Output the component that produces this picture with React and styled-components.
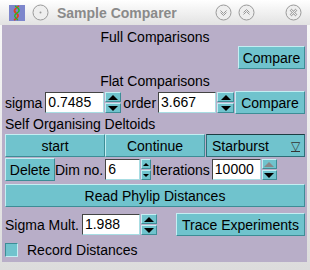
import React from 'react';
import styled, { createGlobalStyle } from 'styled-components';

const Global = createGlobalStyle`
  body { margin: 0; background: #ffffff; }
  * { box-sizing: border-box; }
`;

const Window = styled.div`
  width: 310px;
  height: 270px;
  display: flex;
  flex-direction: column;
  background: linear-gradient(#fafafa, #dcdcdc);
  font-family: "Liberation Sans", Arial, sans-serif;
  font-size: 14px;
  color: #000;
`;

const TitleBar = styled.div`
  height: 25px;
  display: flex;
  align-items: center;
  padding: 0 8px 0 9px;
  background: linear-gradient(#ffffff, #e2e2e2);
`;

const Title = styled.span`
  margin-left: 8px;
  font-weight: bold;
  font-size: 14px;
  color: #8a8a8a;
  flex: 1;
`;

const TitleBtn = styled.svg`
  width: 17px;
  height: 17px;
  margin-left: ${(p) => p.$gap || 0}px;
`;

const Panel = styled.div`
  flex: 1;
  margin: 0 3px 8px 2px;
  padding: 3px 2px 0 3px;
  background: #b8aec8;
  display: flex;
  flex-direction: column;
`;

const Heading = styled.div`
  height: 18px;
  line-height: 18px;
  text-align: ${(p) => p.$align || 'center'};
  margin-top: ${(p) => p.$mt || 0}px;
`;

const Row = styled.div`
  display: flex;
  align-items: center;
  height: ${(p) => p.$h || 23}px;
  margin-top: ${(p) => p.$mt || 0}px;
  justify-content: ${(p) => p.$justify || 'flex-start'};
`;

const Button = styled.div`
  height: ${(p) => p.$h || 23}px;
  width: ${(p) => (p.$w ? `${p.$w}px` : 'auto')};
  flex: ${(p) => (p.$grow ? 1 : 'none')};
  margin-left: ${(p) => p.$ml || 0};
  padding: 0 3px;
  display: flex;
  align-items: center;
  justify-content: center;
  background: #70c3cd;
  border: 1px solid;
  border-color: #c4eef2 #3d8d96 #3d8d96 #c4eef2;
  white-space: nowrap;
`;

const Label = styled.span`
  margin: 0 ${(p) => p.$mr || 2}px 0 ${(p) => p.$ml || 0}px;
  white-space: nowrap;
`;

const Input = styled.div`
  width: ${(p) => p.$w}px;
  height: 21px;
  background: #fff;
  border: 1px solid;
  border-color: #444 #a8dde3 #a8dde3 #444;
  padding: 0 2px;
  line-height: 19px;
`;

const Spin = styled.div`
  width: ${(p) => p.$w || 16}px;
  height: 21px;
  margin-left: 1px;
  display: flex;
  flex-direction: column;
  gap: 1px;
`;

const SpinHalf = styled.div`
  flex: 1;
  background: #70c3cd;
  display: flex;
  align-items: center;
  justify-content: center;
  border: 1px solid;
  border-color: #c4eef2 #3d8d96 #3d8d96 #c4eef2;
`;

const Arrow = styled.div`
  width: 0;
  height: 0;
  border-left: ${(p) => p.$s}px solid transparent;
  border-right: ${(p) => p.$s}px solid transparent;
  ${(p) => (p.$up ? 'border-bottom' : 'border-top')}: ${(p) => p.$s}px solid ${(p) => p.$c || '#000'};
`;

const Combo = styled.div`
  flex: 1;
  height: 23px;
  margin-left: 1px;
  background: #70c3cd;
  border: 1px solid #2f6f78;
  border-top-color: #1d3d42;
  display: flex;
  align-items: center;
  padding: 0 4px 0 5px;
`;

const ComboText = styled.span`
  flex: 1;
`;

const ComboArrow = styled.span`
  font-size: 12px;
  text-decoration: underline;
  color: #333;
`;

const Check = styled.div`
  width: 13px;
  height: 14px;
  background: #70c3cd;
  border: 1px solid;
  border-color: #3d8d96 #c4eef2 #c4eef2 #3d8d96;
  margin-right: 9px;
`;

const Spinner = ({ w, s = 4, disabledUp }) => (
  <Spin $w={w}>
    <SpinHalf>
      <Arrow $up $s={s} $c={disabledUp ? '#888' : '#000'} />
    </SpinHalf>
    <SpinHalf>
      <Arrow $s={s} />
    </SpinHalf>
  </Spin>
);

const CircleBtn = ({ children, gap }) => (
  <TitleBtn viewBox="0 0 17 17" $gap={gap}>
    <circle cx="8.5" cy="8.5" r="7.5" fill="#eee" stroke="#9a9a9a" strokeWidth="1" />
    {children}
  </TitleBtn>
);

export default function App() {
  return (
    <>
      <Global />
      <Window>
        <TitleBar>
          <svg width="16" height="16" viewBox="0 0 16 16">
            <rect width="16" height="16" fill="#7d86cc" />
            <path d="M5 15 Q12 11 7 8 Q3 5 10 1" stroke="#d42" strokeWidth="1.8" fill="none" />
            <path d="M9 15 Q3 11 8 8 Q13 5 6 1" stroke="#2b2" strokeWidth="1.4" fill="none" />
          </svg>
          <CircleBtn gap={7}>
            <circle cx="8.5" cy="8.5" r="1" fill="#999" />
          </CircleBtn>
          <Title>Sample Comparer</Title>
          <CircleBtn>
            <path d="M5.5 6.5 L8.5 9.5 L11.5 6.5 M5.5 8.5 L8.5 11.5 L11.5 8.5" stroke="#999" fill="none" />
          </CircleBtn>
          <CircleBtn gap={6}>
            <path d="M5.5 10.5 L8.5 7.5 L11.5 10.5 M5.5 8.5 L8.5 5.5 L11.5 8.5" stroke="#999" fill="none" />
          </CircleBtn>
          <CircleBtn gap={30}>
            <path d="M5.5 5.5 L11.5 11.5 M11.5 5.5 L5.5 11.5" stroke="#aaa" strokeWidth="2.5" fill="none" />
            <path d="M5.5 5.5 L11.5 11.5 M11.5 5.5 L5.5 11.5" stroke="#eee" strokeWidth="1" fill="none" />
          </CircleBtn>
        </TitleBar>
        <Panel>
          <Heading>Full Comparisons</Heading>
          <Row $justify="flex-end">
            <Button $w={67}>Compare</Button>
          </Row>
          <Heading $mt={3}>Flat Comparisons</Heading>
          <Row $mt={1}>
            <Label $mr={3}>sigma</Label>
            <Input $w={59}>0.7485</Input>
            <Spinner w={16} s={5} />
            <Label $ml={2} $mr={2}>order</Label>
            <Input $w={58}>3.667</Input>
            <Spinner w={17} s={5} />
            <Button $grow $ml="1px">Compare</Button>
          </Row>
          <Heading $align="left" $mt={1}>Self Organising Deltoids</Heading>
          <Row $mt={1}>
            <Button $w={100}>start</Button>
            <Button $w={100}>Continue</Button>
            <Combo>
              <ComboText>Starburst</ComboText>
              <ComboArrow>▽</ComboArrow>
            </Combo>
          </Row>
          <Row $mt={1}>
            <Button $w={50}>Delete</Button>
            <Label $mr={2}>Dim no.</Label>
            <Input $w={35}>6</Input>
            <Spinner w={10} s={3} />
            <Label $ml={1} $mr={2}>Iterations</Label>
            <Input $w={49}>10000</Input>
            <Spinner w={15} s={5} disabledUp />
          </Row>
          <Row $mt={3}>
            <Button $grow>Read Phylip Distances</Button>
          </Row>
          <Row $mt={6}>
            <Label $mr={3}>Sigma Mult.</Label>
            <Input $w={58}>1.988</Input>
            <Spinner w={16} s={5} />
            <Button $ml="auto" $w={129}>Trace Experiments</Button>
          </Row>
          <Row $mt={6} $h={16}>
            <Check />
            <Label>Record Distances</Label>
          </Row>
        </Panel>
      </Window>
    </>
  );
}
